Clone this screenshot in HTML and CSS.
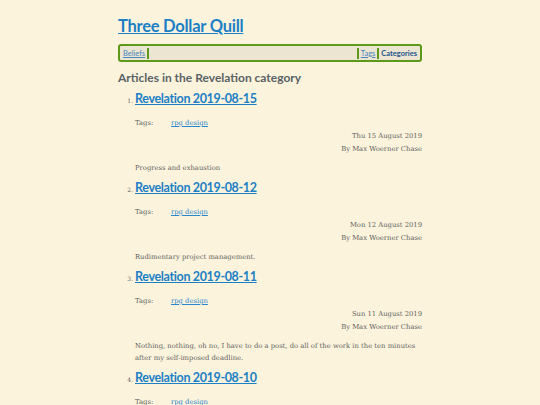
FILE: index.html
```html
<!DOCTYPE html>
<html>
<head>
<meta charset="utf-8">
<link rel="stylesheet" href="styles.css">
</head>
<body>
<div class="page">
  <header class="site-header">
    <h1 class="site-title"><a href="#">Three Dollar Quill</a></h1>
    <nav class="nav">
      <a class="nav-link" href="#">Beliefs</a>
      <span class="sep"></span>
      <span class="spacer"></span>
      <span class="sep"></span>
      <a class="nav-link" href="#">Tags</a>
      <span class="sep"></span>
      <a class="nav-link current" href="#">Categories</a>
    </nav>
  </header>
  <h2 class="section-title">Articles in the Revelation category</h2>
  <ol class="articles">
    <li class="article">
      <h3 class="article-title"><a href="#">Revelation 2019-08-15</a></h3>
      <div class="tags"><span class="tags-label">Tags:</span><a href="#">rpg design</a></div>
      <div class="meta"><div>Thu 15 August 2019</div><div>By Max Woerner Chase</div></div>
      <p class="summary">Progress and exhaustion</p>
    </li>
    <li class="article">
      <h3 class="article-title"><a href="#">Revelation 2019-08-12</a></h3>
      <div class="tags"><span class="tags-label">Tags:</span><a href="#">rpg design</a></div>
      <div class="meta"><div>Mon 12 August 2019</div><div>By Max Woerner Chase</div></div>
      <p class="summary">Rudimentary project management.</p>
    </li>
    <li class="article">
      <h3 class="article-title"><a href="#">Revelation 2019-08-11</a></h3>
      <div class="tags"><span class="tags-label">Tags:</span><a href="#">rpg design</a></div>
      <div class="meta"><div>Sun 11 August 2019</div><div>By Max Woerner Chase</div></div>
      <p class="summary">Nothing, nothing, oh no, I have to do a post, do all of the work in the ten minutes after my self-imposed deadline.</p>
    </li>
    <li class="article">
      <h3 class="article-title"><a href="#">Revelation 2019-08-10</a></h3>
      <div class="tags"><span class="tags-label">Tags:</span><a href="#">rpg design</a></div>
      <div class="meta"><div>Sat 10 August 2019</div><div>By Max Woerner Chase</div></div>
      <p class="summary">More work.</p>
    </li>
  </ol>
</div>
</body>
</html>
```
FILE: styles.css
```css
html, body {
  margin: 0;
  padding: 0;
  background: #fbf3dc;
}
body {
  font-family: "DejaVu Serif", serif;
  color: #626262;
}
a {
  color: #2a86cc;
}
.page {
  width: 304px;
  margin: 0 auto;
  padding-top: 14px;
}
.site-title {
  margin: 0;
  font-family: Lato, sans-serif;
  font-size: 16.5px;
  font-weight: 700;
  letter-spacing: -0.25px;
  line-height: 24px;
}
.site-title a {
  color: #1c80c6;
}
.nav {
  margin-top: 6px;
  display: flex;
  align-items: center;
  height: 12px;
  padding: 1px 1px;
  border: 2px solid #5d9a1c;
  border-radius: 3px;
  background: #ece5d1;
  font-family: Lato, sans-serif;
  font-size: 7.5px;
}
.nav-link {
  color: #4a86bd;
  padding: 0 2px;
  white-space: nowrap;
  flex-shrink: 0;
}
.nav-link.current {
  font-weight: 700;
  color: #24558f;
  text-decoration: none;
}
.sep {
  flex-shrink: 0;
  width: 2px;
  height: 11px;
  background: #5d9a1c;
}
.spacer {
  flex: 1;
}
.section-title {
  margin: 8px 0 0;
  font-family: Lato, sans-serif;
  font-size: 12px;
  font-weight: 700;
  line-height: 16px;
  color: #5a6266;
}
.articles {
  margin: 4px 0 0;
  padding-left: 17px;
  font-size: 6px;
}
.article {
  padding-bottom: 5px;
}
.article::marker {
  font-size: 6px;
}
.article-title {
  margin: 0;
  font-family: Lato, sans-serif;
  font-size: 12.5px;
  font-weight: 700;
  letter-spacing: -0.35px;
  line-height: 18px;
}
.article-title a {
  color: #1c80c6;
}
.tags {
  margin-top: 9px;
  display: flex;
  font-size: 6.8px;
  line-height: 12px;
}
.tags-label {
  width: 36px;
}
.meta {
  text-align: right;
  font-size: 6.8px;
  line-height: 12.5px;
  margin-top: 1px;
}
.summary {
  margin: 7px 0 0;
  font-size: 6.8px;
  line-height: 12px;
}
```
